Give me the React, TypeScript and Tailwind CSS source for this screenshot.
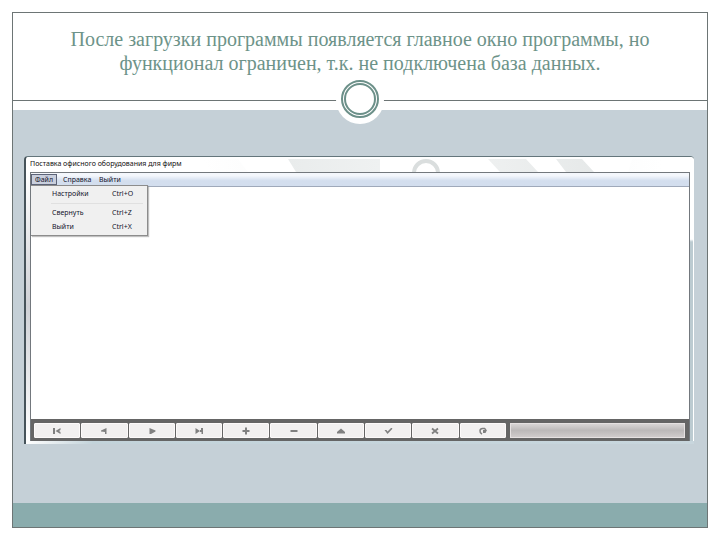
import type { ReactNode } from 'react';

interface MenuItem {
  label: string;
  shortcut: string;
}

interface NavButton {
  label: string;
  icon: ReactNode;
}

const menuLinks = ['Справка', 'Выйти'];

const settingsItem: MenuItem = { label: 'Настройки', shortcut: 'Ctrl+O' };

const windowItems: MenuItem[] = [
  { label: 'Свернуть', shortcut: 'Ctrl+Z' },
  { label: 'Выйти', shortcut: 'Ctrl+X' },
];

// DB navigator buttons, icons are drawn on a 10x8 grid
const navButtons: NavButton[] = [
  { label: 'Первая запись', icon: <path d="M1 1h2v6H1zM8.500 1v2L7 4l1.500 1v2L3.500 4z" /> },
  { label: 'Предыдущая запись', icon: <path d="M7.500 1v6H6V5L2 4.500v-1z" /> },
  { label: 'Следующая запись', icon: <path d="M2.500 1L8.500 3.500v1L4 7H2.500z" /> },
  { label: 'Последняя запись', icon: <path d="M1.500 1L6 4 1.500 7zM6 3h1V1h2v6H7.500V5H6z" /> },
  { label: 'Добавить', icon: <path d="M4 .5h2V3h2.500v2H6v2.500H4V5H1.500V3H4z" /> },
  { label: 'Удалить', icon: <path d="M1.500 3h7v2h-7z" /> },
  { label: 'Изменить', icon: <path d="M5 1.500L9 5v1.500H1V5z" /> },
  { label: 'Сохранить', icon: <path d="M1.500 3h2L4.500 4.500 8 1h1.200v1L4.500 7z" /> },
  { label: 'Отменить', icon: <path d="M2 1.500l6 5M8 1.500l-6 5" fill="none" stroke="currentColor" strokeWidth="1.800" /> },
  {
    label: 'Обновить',
    icon: (
      <>
        <path d="M4 7.200C1 5.500 1.500 1.500 4.500 1.500h2L8 3" fill="none" stroke="currentColor" strokeWidth="1.500" />
        <path d="M5 3h4L7.500 6H5z" />
      </>
    ),
  },
];

function MenuRow({ item }: { item: MenuItem }) {
  return (
    <button className="flex h-[14px] w-full items-center pl-[21px] text-left">
      <span className="w-[60px]">{item.label}</span>
      <span>{item.shortcut}</span>
    </button>
  );
}

function FileMenu() {
  return (
    <div className="absolute top-full left-0 z-10 -mt-px w-[117px] border border-l-0 border-[#8c8c8c] bg-[#f0f0f0] pt-px pb-px shadow-[1px_1px_1px_#8888]">
      <MenuRow item={settingsItem} />
      <hr className="my-[2px] mr-1 ml-5 border-[#e0e0e0]" />
      {windowItems.map((item) => (
        <MenuRow key={item.label} item={item} />
      ))}
    </div>
  );
}

function AppWindow() {
  return (
    <section className="flex flex-1 flex-col rounded-t border-t border-l-2 border-t-[#64757b] border-l-[#46535a] bg-white font-['Noto_Sans','Open_Sans',sans-serif] text-[7px] leading-[14px] text-[#111]">
      <div className="relative h-[15px] overflow-hidden rounded-t bg-white pl-1">
        {/* Glass reflections in the title bar */}
        <svg className="absolute inset-0 h-full w-full" viewBox="0 0 668 15" preserveAspectRatio="none" aria-hidden="true">
          <defs>
            <linearGradient id="glass">
              <stop offset="0" stopColor="#eceeee" stopOpacity="0" />
              <stop offset="1" stopColor="#e6e9e9" />
            </linearGradient>
            <linearGradient id="glassBack">
              <stop offset="0" stopColor="#e9ecec" />
              <stop offset="1" stopColor="#eceeee" stopOpacity="0" />
            </linearGradient>
          </defs>
          <path d="M176 2h36l10 13h-36zM462 2h38l12 13h-38zM530 2h26l12 13h-28z" fill="url(#glass)" />
          <path d="M262 2h92v13h-84zM606 2h30v13h-34z" fill="url(#glassBack)" />
          <circle cx="400" cy="16" r="12" fill="none" stroke="#dadede" strokeWidth="4" />
        </svg>
        <h2 className="relative">Поставка офисного оборудования для фирм</h2>
      </div>

      <div className="flex flex-1">
        <div className="w-1 bg-linear-to-b from-white via-[#cfd1d6] to-white" />
        <div className="flex flex-1 flex-col border border-b-0 border-[#73787d] bg-white">
          <nav className="relative flex h-[14px] items-center border-b border-[#9fa9ba] bg-linear-to-b from-[#f4f7fc] from-20% to-[#d3deee] to-60% text-[#14142c]">
            <button className="h-[11px] w-[26px] border border-[#5d6478] bg-[#c9cfdd] leading-[9px]">Файл</button>
            {menuLinks.map((label) => (
              <button key={label} className="w-9 pl-[6px] text-left leading-[11px]">
                {label}
              </button>
            ))}
            <FileMenu />
          </nav>

          <div className="flex-1" />

          <div className="flex h-[22px] gap-1 bg-[#656565] px-[3px] pt-1 pb-[3px]">
            <div className="flex flex-[474] gap-px">
              {navButtons.map((button) => (
                <button
                  key={button.label}
                  aria-label={button.label}
                  className="flex flex-1 items-center justify-center rounded-[1px] border border-[#fdfafa] bg-[#f2f0f0] text-[#808080]"
                >
                  <svg className="h-2 w-[10px]" viewBox="0 0 10 8" fill="currentColor">
                    {button.icon}
                  </svg>
                </button>
              ))}
            </div>
            <div className="mr-px flex-[174] border border-[#e6e2e2] bg-linear-to-b from-[#d8d5d5] via-[#bcb9b9] to-[#cfcbcb]" />
          </div>
        </div>
        <div className="w-1 border-r border-white bg-linear-to-b from-white from-25% to-[#bccbd1] to-26%" />
      </div>
      <div className="h-[3px] bg-linear-to-r from-white via-[#c3d3da] via-10% to-[#c8d6dd]" />
    </section>
  );
}

export default function App() {
  return (
    <div className="flex min-h-screen flex-col bg-white p-3">
      <main className="flex flex-1 flex-col border border-[#6d7575]">
        <header className="relative h-[88px] border-b border-[#6d7575] px-12 pt-[14px]">
          <h1 className="text-center font-['Liberation_Serif',serif] text-[20px] leading-6 text-[#6d9389]">
            После загрузки программы появляется главное окно программы, но функционал ограничен, т.к. не подключена база данных.
          </h1>
          {/* Ring over the divider */}
          <svg className="absolute -bottom-6 left-1/2 h-12 w-12 -translate-x-1/2" viewBox="0 0 48 48" aria-hidden="true">
            <circle cx="24" cy="24" r="24" fill="#fff" />
            <circle cx="24" cy="23" r="18" fill="none" stroke="#6c9089" strokeWidth="2" />
            <circle cx="24" cy="23" r="15" fill="none" stroke="#6c9089" strokeWidth="2" />
          </svg>
        </header>

        <div className="mt-[9px] flex flex-1 flex-col bg-[#c5d0d7] pt-[46px] pr-[13px] pb-[59px] pl-[11px]">
          <AppWindow />
        </div>
        <footer className="h-6 bg-[#8aacad]" />
      </main>
    </div>
  );
}
